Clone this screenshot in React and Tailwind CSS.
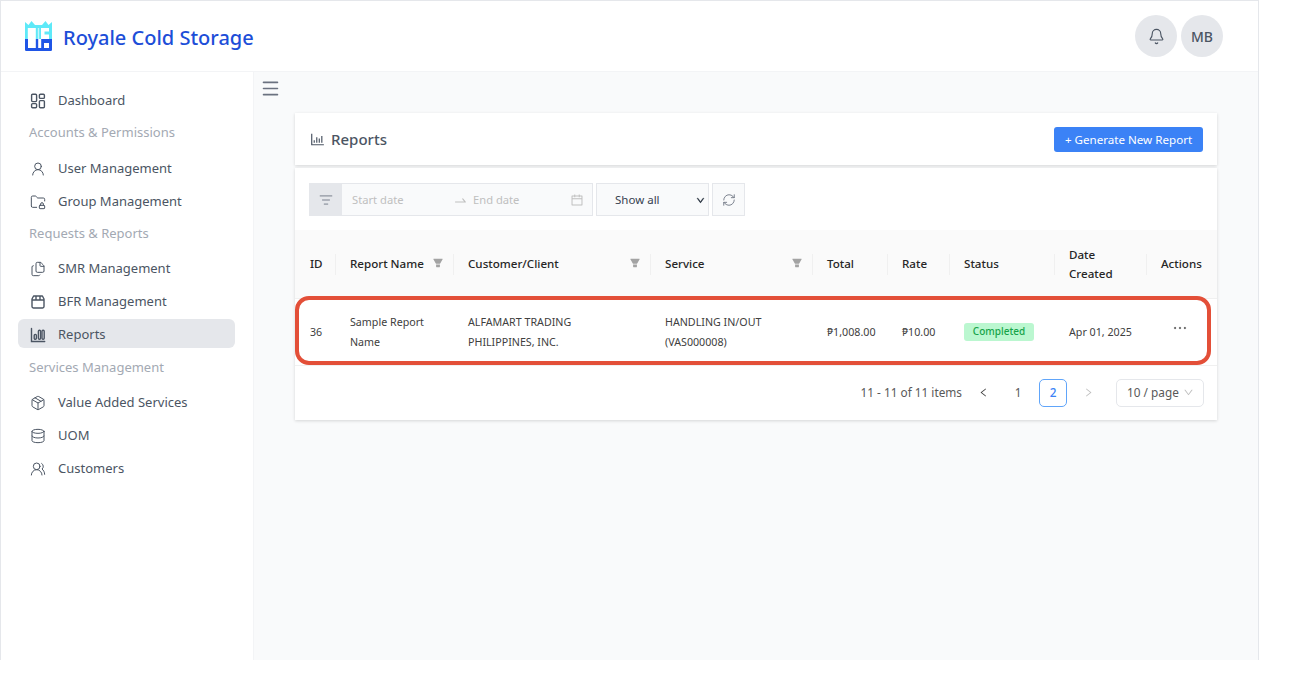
import React from "react";
import { Bell, Menu, UserRound, FolderLock, Files, Package, Database, UsersRound, ListFilter, RefreshCw } from "lucide-react";
import { AiOutlineBarChart, AiFillFilter, AiOutlineCalendar, AiOutlineSwapRight, AiOutlineEllipsis, AiOutlineLeft, AiOutlineRight, AiOutlineDown } from "react-icons/ai";

function DashIcon() {
  return (
    <svg width="16" height="16" viewBox="0 0 16 16" fill="none" stroke="currentColor" strokeWidth="1.4">
      <rect x="1.6" y="1.2" width="5" height="7.4" rx="1" />
      <rect x="9.4" y="1.2" width="5" height="4.2" rx="1" />
      <rect x="1.6" y="10.6" width="5" height="4.2" rx="1" />
      <rect x="9.4" y="7.6" width="5" height="7.2" rx="1" />
    </svg>
  );
}
function BoxIcon() {
  return (
    <svg width="16" height="16" viewBox="0 0 16 16" fill="none" stroke="currentColor" strokeWidth="1.4" strokeLinejoin="round">
      <path d="M3.6 2h8.8l1.6 3v7.6a1.4 1.4 0 0 1-1.4 1.4H3.4A1.4 1.4 0 0 1 2 12.6V5z" />
      <path d="M2 6h12M6 2v4M10 2v4" />
    </svg>
  );
}
function ChartIcon() {
  return (
    <svg width="16" height="16" viewBox="0 0 16 16" fill="none" stroke="currentColor" strokeWidth="1.4" strokeLinecap="round">
      <path d="M1.500 1.500v13h13.200" />
      <rect x="4.200" y="7.400" width="2.200" height="4.800" rx="1" />
      <rect x="8.400" y="3.200" width="2.200" height="9" rx="1" />
      <rect x="12" y="3.200" width="2.200" height="9" rx="1" />
    </svg>
  );
}
function Logo() {
  return (
    <svg width="27" height="30" viewBox="0 0 27 30">
      <path d="M0 1l3.500 3 3-4 3.500 4h7l3.500-4 3 4L27 1v17H0z" fill="#5ee9f8" />
      <path d="M2.800 7h8v11h-8zM16 7h8v3.500h-4.500v3h4.500V18h-8z" fill="#ffffff" />
      <path d="M12.800 7h1.400v11h-1.400z" fill="#c5f6fb" />
      <path d="M0 18h27v10.800a1.200 1.200 0 0 1-1.200 1.200H1.200A1.200 1.200 0 0 1 0 28.800z" fill="#1f55e6" />
      <path d="M3 18h7.800v9H3zM13.200 18h3v9h-3zM19 22h5v5h-5z" fill="#ffffff" />
    </svg>
  );
}

function Item({ icon, label, active }) {
  return (
    <div className={`ml-[17px] mr-[18px] flex h-[29px] items-center rounded-md pl-[11px] pt-[3px] text-[13px] text-[#4b5563] ${active ? "bg-[#e5e7eb]" : ""}`}>
      <span className="flex w-[18px] justify-center">{icon}</span>
      <span className="ml-[11px]">{label}</span>
    </div>
  );
}
function Section({ label }) {
  return <div className="flex h-[24px] items-center pl-[28px] pt-[5px] text-[13px] text-[#a3a9b3]">{label}</div>;
}
const ic = { size: 16, strokeWidth: 1.5 };

function Th({ children, w, filter, last, first }) {
  return (
    <th style={{ width: w }} className={`relative h-[68px] bg-[#fafafa] pr-[14px] text-left text-[11.6px] font-medium leading-[19px] text-[#262626] ${first ? "pl-[15px]" : "pl-[14px]"}`}>
      <span>{children}</span>
      {filter && <AiFillFilter className="absolute right-[10px] top-[27px] text-[#a3a3a3]" size={12} />}
      {!last && <span className="absolute right-0 top-[24px] h-[21px] w-px bg-[#f0f0f0]" />}
    </th>
  );
}

export default function App() {
  return (
    <div className="h-[681px] w-[1293px] overflow-hidden bg-white font-['Noto_Sans','Open_Sans',sans-serif]">
      <div className="flex h-[660px] w-[1259px] flex-col border-l border-r border-t border-[#e5e7eb] bg-white">
        <header className="flex h-[71px] shrink-0 items-center justify-between border-b border-[#f3f4f6] pl-[24px] pr-[35px]">
          <div className="flex items-center gap-[11px]">
            <Logo />
            <span className="pt-[4px] text-[20px] font-medium text-[#1d4ed8]">Royale Cold Storage</span>
          </div>
          <div className="flex items-center gap-[4px]">
            <div className="flex h-[42px] w-[42px] items-center justify-center rounded-full bg-[#e5e7eb] text-[#4b5563]">
              <Bell size={17} strokeWidth={1.6} />
            </div>
            <div className="flex h-[42px] w-[42px] items-center justify-center rounded-full bg-[#e5e7eb] text-[14px] font-medium text-[#4b5563]">MB</div>
          </div>
        </header>
        <div className="flex min-h-0 flex-1">
          <aside className="w-[253px] shrink-0 border-r border-[#f3f4f6] bg-white pt-[13px]">
            <Item icon={<DashIcon />} label="Dashboard" />
            <div className="mt-[4px]"><Section label="Accounts & Permissions" /></div>
            <div className="mt-[11px] flex flex-col gap-[4px]">
              <Item icon={<UserRound {...ic} />} label="User Management" />
              <Item icon={<FolderLock {...ic} />} label="Group Management" />
            </div>
            <div className="mt-[4px]"><Section label="Requests & Reports" /></div>
            <div className="mt-[10px] flex flex-col gap-[4px]">
              <Item icon={<Files {...ic} />} label="SMR Management" />
              <Item icon={<BoxIcon />} label="BFR Management" />
              <Item icon={<ChartIcon />} label="Reports" active />
            </div>
            <div className="mt-[5px]"><Section label="Services Management" /></div>
            <div className="mt-[10px] flex flex-col gap-[4px]">
              <Item icon={<Package {...ic} />} label="Value Added Services" />
              <Item icon={<Database {...ic} />} label="UOM" />
              <Item icon={<UsersRound {...ic} />} label="Customers" />
            </div>
          </aside>
          <main className="min-w-0 flex-1 bg-[#f9fafb]">
            <div className="pl-[6px] pt-[6px] text-[#6b7280]"><Menu size={21} strokeWidth={1.8} /></div>
            <div className="ml-[41px] mt-[14px] w-[922px]">
              <div className="flex h-[52px] items-center justify-between bg-white pl-[14px] pr-[14px] shadow-[0_1px_3px_rgba(0,0,0,0.15)]">
                <div className="flex items-center gap-[5px] text-[#4b5563]">
                  <AiOutlineBarChart size={17} />
                  <span className="pt-[1px] text-[15px] font-medium">Reports</span>
                </div>
                <button className="flex h-[25px] w-[149px] items-center justify-center rounded-[3px] bg-[#3b82f6] pt-[1px] text-[11.6px] text-white">+ Generate New Report</button>
              </div>
              <div className="mt-[3px] bg-white shadow-[0_1px_3px_rgba(0,0,0,0.15)]">
                <div className="flex h-[62px] items-center gap-[3px] pl-[14px] pt-[1px]">
                  <div className="flex h-[33px] w-[284px] items-stretch border border-[#e5e7eb] bg-[#f9fafb]">
                    <div className="flex w-[32px] items-center justify-center bg-[#e5e7eb] text-[#6b7280]"><ListFilter size={14} strokeWidth={1.5} /></div>
                    <div className="flex flex-1 items-center pl-[10px] pt-[1px] text-[11.2px] text-[#bfbfbf]">
                      <span className="w-[101px]">Start date</span>
                      <AiOutlineSwapRight size={15} />
                      <span className="ml-[5px] w-[97px]">End date</span>
                      <AiOutlineCalendar size={14} />
                    </div>
                  </div>
                  <div className="flex h-[33px] w-[113px] items-center justify-between border border-[#e5e7eb] bg-[#f9fafb] pl-[18px] pr-[2px] pt-[1px] text-[11.5px] text-[#374151]">
                    <span>Show all</span>
                    <AiOutlineDown size={9} className="mr-[1px] stroke-[60] text-[#1f2937]" />
                  </div>
                  <div className="flex h-[33px] w-[33px] items-center justify-center border border-[#e5e7eb] bg-[#f9fafb] text-[#6b7280]"><RefreshCw size={14} strokeWidth={1.5} /></div>
                </div>
                <div className="relative">
                  <table className="w-full table-fixed border-collapse">
                    <thead>
                      <tr className="border-b border-[#f0f0f0]">
                        <Th w={41} first>ID</Th>
                        <Th w={118} filter>Report Name</Th>
                        <Th w={197} filter>Customer/Client</Th>
                        <Th w={162} filter>Service</Th>
                        <Th w={75}>Total</Th>
                        <Th w={62}>Rate</Th>
                        <Th w={105}>Status</Th>
                        <Th w={92}>Date Created</Th>
                        <Th w={70} last>Actions</Th>
                      </tr>
                    </thead>
                    <tbody>
                      <tr className="h-[67px] border-b border-[#f0f0f0] text-[10.7px] leading-[19.5px] text-[#404040]">
                        <td className="pl-[15px] pr-[14px] pt-[2px]">36</td>
                        <td className="px-[14px] pt-[2px]">Sample Report Name</td>
                        <td className="px-[14px] pt-[2px]">ALFAMART TRADING PHILIPPINES, INC.</td>
                        <td className="px-[14px] pt-[2px]">HANDLING IN/OUT (VAS000008)</td>
                        <td className="px-[14px] pt-[2px]">₱1,008.00</td>
                        <td className="px-[14px] pt-[2px]">₱10.00</td>
                        <td className="px-[14px]">
                          <span className="inline-flex h-[18px] w-[70px] items-center justify-center rounded-[3px] bg-[#bbf7d0] text-[10px] font-medium text-[#16a34a]">Completed</span>
                        </td>
                        <td className="px-[14px] pt-[2px]">Apr 01, 2025</td>
                        <td className="px-[14px]"><AiOutlineEllipsis className="ml-[10px] mt-[-7px] stroke-[10] text-[#595959]" size={18} /></td>
                      </tr>
                    </tbody>
                  </table>
                  <div className="pointer-events-none absolute left-0 top-[66px] h-[69px] w-[916px] rounded-[14px] border-4 border-[#e34f38]" />
                  <div className="flex h-[54px] items-center justify-end pr-[13px] text-[11.8px] text-[#595959]">
                    <span>11 - 11 of 11 items</span>
                    <AiOutlineLeft size={11} className="ml-[16px] text-[#404040]" />
                    <span className="ml-[15px] flex w-[28px] justify-center">1</span>
                    <span className="ml-[7px] flex h-[28px] w-[28px] items-center justify-center rounded-[5px] border border-[#60a5fa] font-medium text-[#3b82f6]">2</span>
                    <AiOutlineRight size={11} className="ml-[16px] text-[#bfbfbf]" />
                    <div className="ml-[22px] flex h-[28px] w-[88px] items-center justify-between rounded-[5px] border border-[#e5e7eb] pl-[10px] pr-[9px]">
                      <span>10 / page</span>
                      <AiOutlineDown size={11} className="text-[#bfbfbf]" />
                    </div>
                  </div>
                </div>
              </div>
            </div>
          </main>
        </div>
      </div>
    </div>
  );
}
